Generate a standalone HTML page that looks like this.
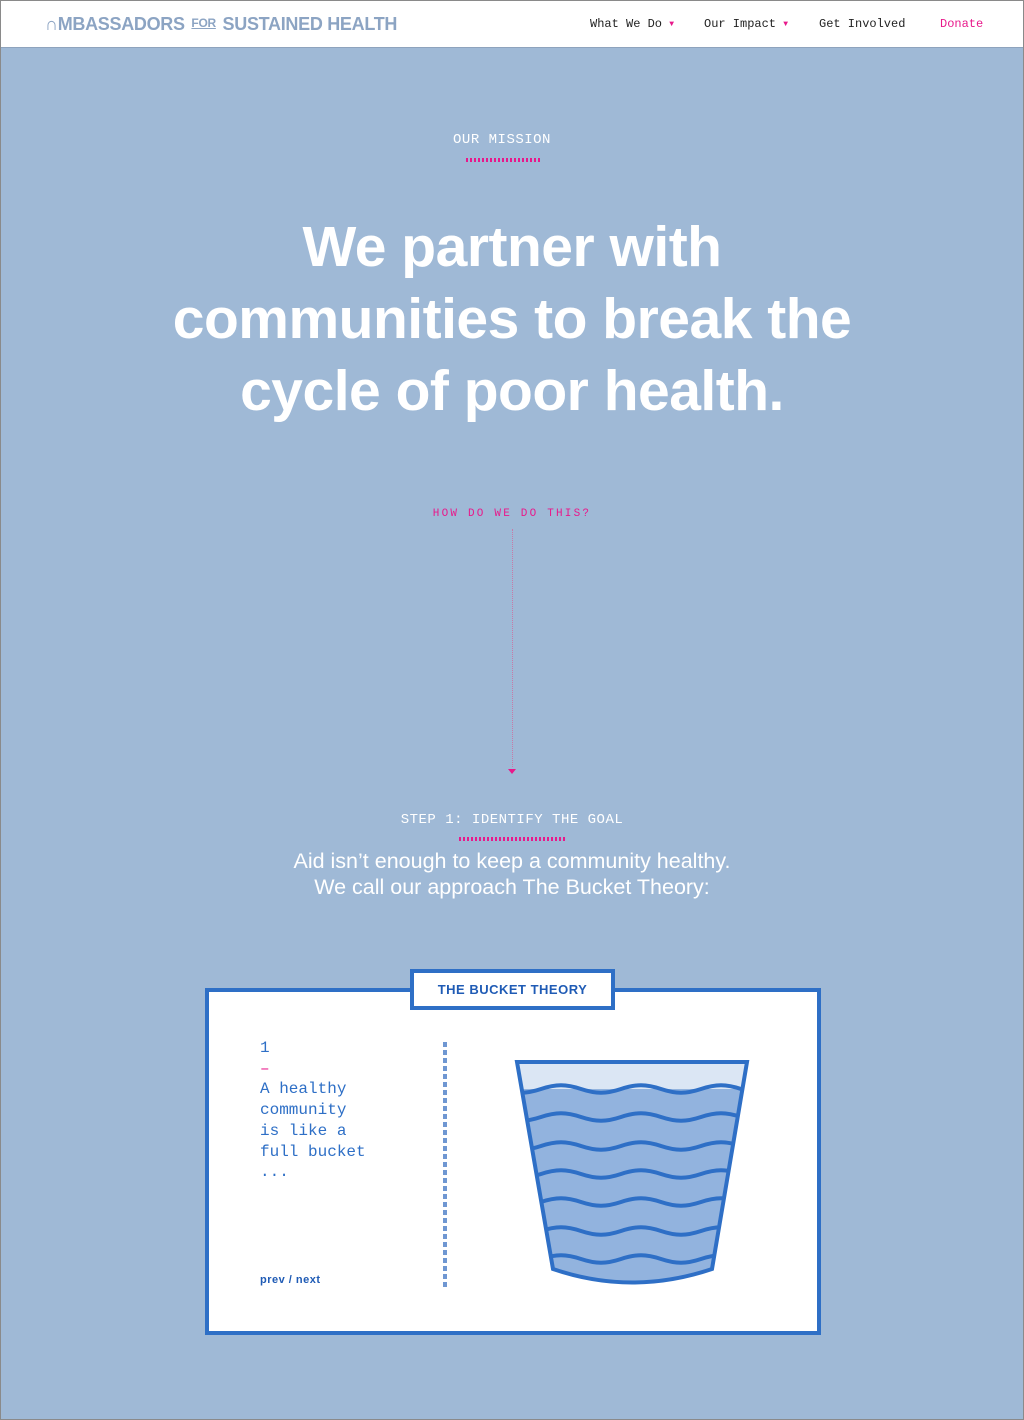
<!DOCTYPE html>
<html><head><meta charset="utf-8"><style>
*{margin:0;padding:0;box-sizing:border-box}
html,body{width:1024px;height:1420px;overflow:hidden}
body{background:#9fb9d6;font-family:"Liberation Sans",sans-serif;position:relative;border:1px solid #8a8a8a}
.nav{position:absolute;left:0;top:0;width:1022px;height:47px;background:#fff;border-bottom:1px solid #8ea3bd}
.logo{position:absolute;left:44px;top:13px;font-size:18px;font-weight:bold;color:#8ca4c3;letter-spacing:-0.3px;white-space:nowrap}
.logo .for{font-size:12px;text-decoration:underline;vertical-align:3px;margin:0 2px}
.menu{position:absolute;top:16px;font-family:"Liberation Mono",monospace;font-size:12px;color:#222;white-space:nowrap}
.car{color:#e8198b;font-size:8px;vertical-align:1px}
.mono{font-family:"Liberation Mono",monospace}
.c{position:absolute;left:0;width:1022px;text-align:center}
.sq{position:absolute;height:4px;background:repeating-linear-gradient(90deg,#e8198b 0 2px,transparent 2px 4px)}
</style></head><body>
<div class="nav">
<div class="logo">&#x2229;MBASSADORS <span class="for">FOR</span> SUSTAINED HEALTH</div>
<div class="menu" style="left:589px">What We Do <span class="car">▼</span></div>
<div class="menu" style="left:703px">Our Impact <span class="car">▼</span></div>
<div class="menu" style="left:818px">Get Involved</div>
<div class="menu" style="left:939px;color:#e8198b">Donate</div>
</div>
<div class="c mono" style="top:131px;left:-10px;font-size:14px;color:#fff;letter-spacing:0.5px">OUR MISSION</div>
<div class="sq" style="left:465px;top:157px;width:76px"></div>
<div class="c" style="top:210px;font-size:57px;line-height:72px;color:#fff;font-weight:bold;letter-spacing:-0.5px">We partner with<br>communities to break the<br>cycle of poor health.</div>
<div class="c mono" style="top:507px;font-size:11px;color:#e8198b;letter-spacing:2.2px">HOW DO WE DO THIS?</div>
<div style="position:absolute;left:511px;top:528px;height:238px;border-left:1px dotted #c77aa8"></div>
<div style="position:absolute;left:507px;top:768px;width:0;height:0;border-left:4px solid transparent;border-right:4px solid transparent;border-top:5px solid #e8198b"></div>
<div class="c mono" style="top:811px;font-size:14px;color:#fff;letter-spacing:0.5px">STEP 1: IDENTIFY THE GOAL</div>
<div class="sq" style="left:458px;top:836px;width:108px"></div>
<div class="c" style="top:847px;font-size:21.5px;line-height:26px;color:#fff">Aid isn’t enough to keep a community healthy.<br>We call our approach The Bucket Theory:</div>
<div style="position:absolute;left:204px;top:987px;width:616px;height:347px;background:#fff;border:4px solid #2e6fc6"></div>
<div style="position:absolute;left:409px;top:968px;width:205px;height:41px;background:#fff;border:4px solid #2e6fc6;outline:2px solid #fff;outline-offset:-7px;text-align:center;font-size:13px;font-weight:bold;color:#1f5bb5;line-height:33px;letter-spacing:0.5px">THE BUCKET THEORY</div>
<div class="mono" style="position:absolute;left:259px;top:1037px;font-size:16px;line-height:20.7px;color:#2e6fc6">1<br><span style="color:#e8198b">–</span><br>A healthy<br>community<br>is like a<br>full bucket<br>...</div>
<div style="position:absolute;left:259px;top:1273px;font-size:11px;font-weight:bold;color:#1f5bb5;letter-spacing:0.5px">prev / next</div>
<div style="position:absolute;left:442px;top:1041px;height:245px;width:4px;background:repeating-linear-gradient(180deg,#6f97d2 0 5px,transparent 5px 8px)"></div>
<svg style="position:absolute;left:500px;top:1050px" width="260" height="245" viewBox="500 1050 260 245">
<defs><clipPath id="b"><path d="M516 1061 L746 1061 L711 1268 Q631 1295 552 1268 Z"/></clipPath></defs>
<path d="M516 1061 L746 1061 L711 1268 Q631 1295 552 1268 Z" fill="#92b3de"/>
<g clip-path="url(#b)">
<rect x="500" y="1050" width="260" height="38" fill="#dbe6f4"/>
<g fill="none" stroke="#2e6fc6" stroke-width="4">
<path id="w" d="M500 1088 c15 5 25 5 40 0 s25 -5 40 0 s25 5 40 0 s25 -5 40 0 s25 5 40 0 s25 -5 40 0 s25 5 40 0"/>
<use href="#w" y="28"/><use href="#w" y="57"/><use href="#w" y="85"/><use href="#w" y="113"/><use href="#w" y="142"/><use href="#w" y="170"/>
</g></g>
<path d="M516 1061 L746 1061 L711 1268 Q631 1295 552 1268 Z" fill="none" stroke="#2e6fc6" stroke-width="4"/>
</svg>
</body></html>
